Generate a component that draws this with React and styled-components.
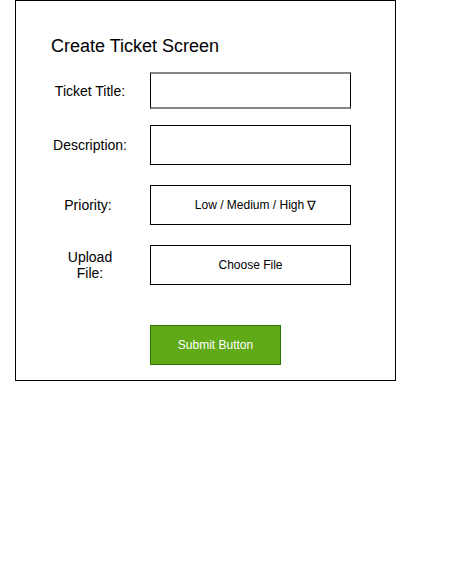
import React from 'react';
import styled, { createGlobalStyle } from 'styled-components';

const GlobalStyle = createGlobalStyle`
  body {
    margin: 0;
    background: #ffffff;
    font-family: "Liberation Sans", Arial, Helvetica, sans-serif;
    color: #000000;
  }
`;

const Screen = styled.div`
  box-sizing: border-box;
  width: 381px;
  height: 381px;
  margin-left: 15px;
  padding: 35px 0 0 14px;
  border: 1px solid #000000;
  background: #ffffff;
`;

const Title = styled.h1`
  margin: 0;
  padding-left: 21px;
  font-size: 18px;
  font-weight: normal;
  line-height: 21px;
`;

const Form = styled.form`
  display: flex;
  flex-direction: column;
  margin: 0;
`;

const Row = styled.div`
  display: grid;
  grid-template-columns: 120px 201px;
  align-items: center;
  height: ${({ $height }) => $height || 40}px;
  margin-top: ${({ $gap }) => $gap}px;
`;

const Label = styled.label`
  font-size: 14px;
  line-height: 16px;
  text-align: center;
  padding-right: ${({ $nudge }) => $nudge || 0}px;
`;

const Field = styled.div`
  box-sizing: border-box;
  display: flex;
  align-items: center;
  justify-content: center;
  height: 100%;
  border: 1px solid #000000;
  ${({ $soft }) =>
    $soft &&
    `
    border-top: 2px solid #858585;
    border-bottom: 2px solid #858585;
  `}
  font-size: 12px;
  padding-left: ${({ $shift }) => $shift || 0}px;
`;

const Arrow = styled.span`
  margin-left: 3px;
  font-size: 13px;
`;

const Submit = styled.button`
  box-sizing: border-box;
  grid-column: 2;
  width: 131px;
  height: 40px;
  background: #60a917;
  border: 1px solid #2d7600;
  color: #ffffff;
  font-family: inherit;
  font-size: 12px;
  padding: 0;
`;

const App = () => (
  <>
    <GlobalStyle />
    <Screen>
      <Title>Create Ticket Screen</Title>
      <Form onSubmit={(e) => e.preventDefault()}>
        <Row $height={37} $gap={15}>
          <Label>Ticket Title:</Label>
          <Field $soft />
        </Row>
        <Row $gap={16}>
          <Label>Description:</Label>
          <Field />
        </Row>
        <Row $gap={20}>
          <Label $nudge={4}>Priority:</Label>
          <Field $shift={10}>
            Low / Medium / High<Arrow>∇</Arrow>
          </Field>
        </Row>
        <Row $gap={20}>
          <Label>
            Upload
            <br />
            File:
          </Label>
          <Field>Choose File</Field>
        </Row>
        <Row $gap={40}>
          <Submit type="submit">Submit Button</Submit>
        </Row>
      </Form>
    </Screen>
  </>
);

export default App;
